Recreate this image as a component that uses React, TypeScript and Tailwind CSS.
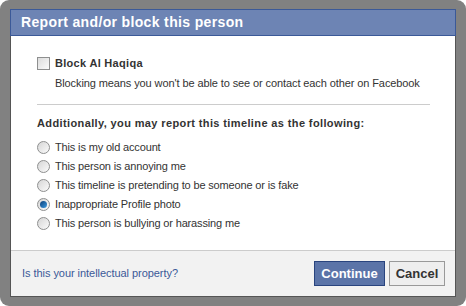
const reasons = [
  { label: 'This is my old account', checked: false },
  { label: 'This person is annoying me', checked: false },
  { label: 'This timeline is pretending to be someone or is fake', checked: false },
  { label: 'Inappropriate Profile photo', checked: true },
  { label: 'This person is bullying or harassing me', checked: false }
]

const Radio = ({ checked }: { checked: boolean }) => (
  <span className="relative w-[13px] h-[13px] rounded-full border border-[#8e8f8f] bg-gradient-to-br from-[#d6d6d6] to-[#fbfbfb] flex items-center justify-center shrink-0">
    {checked && (
      <span className="w-[7px] h-[7px] rounded-full bg-gradient-to-br from-[#0b3f7a] to-[#3d9be0]"></span>
    )}
  </span>
)

export default function App() {
  return (
    <div
      className="w-[466px] h-[306px] bg-white text-[11px] text-[#333]"
      style={{ fontFamily: '"Liberation Sans", Arial, sans-serif' }}
    >
      <div className="h-full rounded-[9px] bg-[#818181] pt-[9px] pb-[9px] px-[10px]">
        <div className="h-full flex flex-col bg-white border border-[#555]">
          <div className="h-[27px] bg-[#6d84b4] border border-[#3b5998] flex items-center pl-[10px] text-white text-[14px] font-bold tracking-[0.35px] -mx-px -mt-px">
            Report and/or block this person
          </div>

          <div className="flex-1 pt-[20px] pl-[26px] pr-[25px]">
            <label className="flex items-center h-[14px] gap-[5px]">
              <span className="w-[13px] h-[13px] border border-[#8e8f8f] bg-gradient-to-br from-[#dcdcdc] to-[#fbfbfb] shrink-0"></span>
              <span className="font-bold text-[#333] tracking-[0.3px]">Block Al Haqiqa</span>
            </label>
            <p className="mt-[6px] pl-[18px] leading-[14px] text-[#333] tracking-[-0.1px]">
              Blocking means you won't be able to see or contact each other on Facebook
            </p>

            <div className="mt-[14px] border-t border-[#ccc]"></div>

            <p className="mt-[11px] leading-[14px] font-bold text-[#333] tracking-[0.38px]">
              Additionally, you may report this timeline as the following:
            </p>

            <div className="mt-[8px] flex flex-col">
              {reasons.map((reason, index) => (
                <label key={index} className="flex items-center h-[19px] gap-[5px]">
                  <Radio checked={reason.checked} />
                  <span className="tracking-[-0.15px]">{reason.label}</span>
                </label>
              ))}
            </div>
          </div>

          <div className="h-[46px] border-t border-[#ccc] bg-[#f2f2f2] flex items-center justify-between pl-[11px] pr-[10px]">
            <a className="text-[#3b5998] tracking-[-0.05px]">Is this your intellectual property?</a>
            <div className="flex gap-[4px]">
              <button className="w-[71px] h-[25px] bg-[#5b74a8] border border-[#29447e] text-white font-bold text-[13px]">
                Continue
              </button>
              <button className="w-[56px] h-[25px] bg-[#eee] border border-[#999] text-[#333] font-bold text-[13px]">
                Cancel
              </button>
            </div>
          </div>
        </div>
      </div>
    </div>
  )
}
